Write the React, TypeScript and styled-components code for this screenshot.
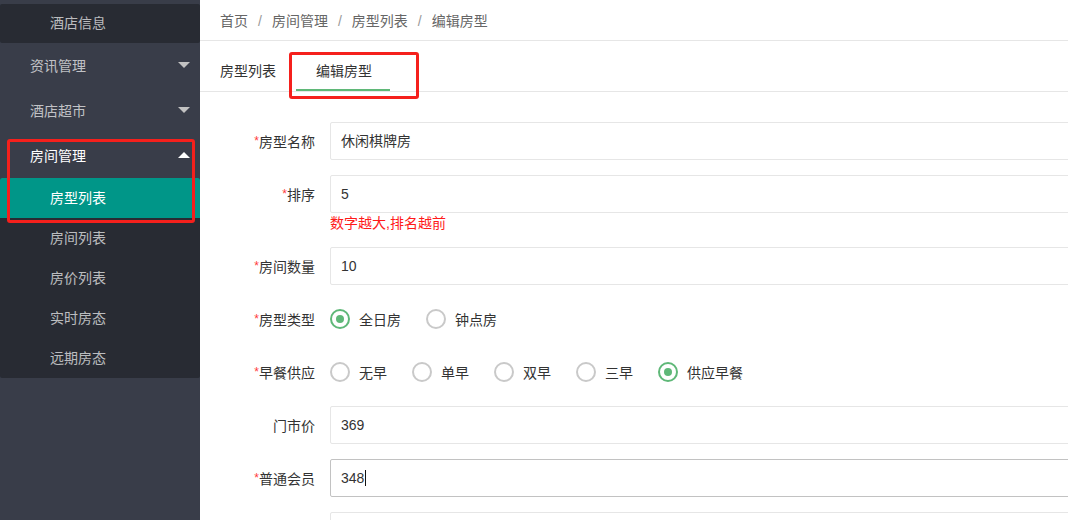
import { createGlobalStyle, styled } from "styled-components";

const GlobalStyle = createGlobalStyle`
  * {
    box-sizing: border-box;
  }
  body {
    margin: 0;
    width: 1068px;
    height: 520px;
    overflow: hidden;
    font-family: "Liberation Sans", "Noto Sans CJK SC", sans-serif;
    font-size: 14px;
    color: #333;
    background: #fff;
  }
`;

const menus = [
  { name: "资讯管理", open: false },
  { name: "酒店超市", open: false },
];

const roomMenu = ["房型列表", "房间列表", "房价列表", "实时房态", "远期房态"];

const crumbs = ["首页", "房间管理", "房型列表", "编辑房型"];

const roomTypes = [
  { name: "全日房", checked: true },
  { name: "钟点房", checked: false },
];

const breakfast = [
  { name: "无早", checked: false },
  { name: "单早", checked: false },
  { name: "双早", checked: false },
  { name: "三早", checked: false },
  { name: "供应早餐", checked: true },
];

const Radio = ({ name, checked }: { name: string; checked: boolean }) => (
  <RadioOption>
    <Circle checked={checked} />
    {name}
  </RadioOption>
);

export default function App() {
  return (
    <>
      <GlobalStyle />
      <Layout>
        <Sidebar>
          <SubMenu>
            <SubItem>酒店信息</SubItem>
          </SubMenu>
          {menus.map((m) => (
            <NavItem key={m.name}>
              {m.name}
              <Arrow up={m.open} />
            </NavItem>
          ))}
          <NavItem active>
            房间管理
            <Arrow up active />
          </NavItem>
          <SubMenu>
            {roomMenu.map((name, i) => (
              <SubItem key={name} active={i === 0}>
                {name}
              </SubItem>
            ))}
          </SubMenu>
          <MarkBox style={{ left: 7, top: 139, width: 188, height: 84 }} />
        </Sidebar>

        <Main>
          <Breadcrumb>
            {crumbs.map((c, i) => (
              <span key={c}>
                {i > 0 && <Sep>/</Sep>}
                {c}
              </span>
            ))}
          </Breadcrumb>

          <TabBar>
            <Tab>房型列表</Tab>
            <Tab active>编辑房型</Tab>
          </TabBar>

          <Form>
            <FormItem>
              <Label required>房型名称</Label>
              <Block>
                <InputBox>休闲棋牌房</InputBox>
              </Block>
            </FormItem>
            <FormItem>
              <Label required>排序</Label>
              <Block>
                <InputBox>5</InputBox>
                <Hint>数字越大,排名越前</Hint>
              </Block>
            </FormItem>
            <FormItem>
              <Label required>房间数量</Label>
              <Block>
                <InputBox>10</InputBox>
              </Block>
            </FormItem>
            <FormItem>
              <Label required>房型类型</Label>
              <RadioGroup>
                {roomTypes.map((r) => (
                  <Radio key={r.name} {...r} />
                ))}
              </RadioGroup>
            </FormItem>
            <FormItem>
              <Label required>早餐供应</Label>
              <RadioGroup>
                {breakfast.map((r) => (
                  <Radio key={r.name} {...r} />
                ))}
              </RadioGroup>
            </FormItem>
            <FormItem>
              <Label>门市价</Label>
              <Block>
                <InputBox>369</InputBox>
              </Block>
            </FormItem>
            <FormItem>
              <Label required>普通会员</Label>
              <Block>
                <InputBox focused>
                  348
                  <Caret />
                </InputBox>
              </Block>
            </FormItem>
            <FormItem>
              <Label />
              <Block>
                <InputBox />
              </Block>
            </FormItem>
          </Form>

          <MarkBox style={{ left: 89, top: 52, width: 130, height: 47 }} />
        </Main>
      </Layout>
    </>
  );
}

const Layout = styled.div`
  display: flex;
  width: 1068px;
  height: 520px;
`;

const Sidebar = styled.div`
  position: relative;
  width: 200px;
  flex-shrink: 0;
  height: 100%;
  background-color: #393d49;
  padding-top: 4px;
`;

const SubMenu = styled.div`
  background-color: #282b33;
  border-radius: 2px;
  overflow: hidden;
`;

const SubItem = styled.div<{ active?: boolean }>`
  height: 40px;
  line-height: 40px;
  padding-left: 50px;
  font-size: 14px;
  color: ${({ active }) => (active ? "#fff" : "rgba(255, 255, 255, 0.7)")};
  background-color: ${({ active }) => (active ? "#009688" : "transparent")};

  &:first-child:last-child {
    height: 39px;
    line-height: 39px;
  }
`;

const NavItem = styled.div<{ active?: boolean }>`
  height: 45px;
  display: flex;
  align-items: center;
  justify-content: space-between;
  padding: 0 10px 2px 30px;
  font-size: 14px;
  color: ${({ active }) => (active ? "#fff" : "rgba(255, 255, 255, 0.7)")};
`;

const Arrow = styled.span<{ up?: boolean; active?: boolean }>`
  width: 0;
  height: 0;
  border: 6px solid transparent;
  ${({ up, active }) =>
    up
      ? `border-bottom-color: ${active ? "#fff" : "#c2c2c2"}; border-top-width: 0;`
      : `border-top-color: ${active ? "#fff" : "#c2c2c2"}; border-bottom-width: 0;`}
`;

const MarkBox = styled.div`
  position: absolute;
  border: 3px solid #f5201c;
  border-radius: 3px;
  pointer-events: none;
`;

const Main = styled.div`
  position: relative;
  flex: 1;
  min-width: 0;
  overflow: hidden;
  background-color: #fff;
`;

const Breadcrumb = styled.div`
  height: 41px;
  display: flex;
  align-items: center;
  padding-left: 20px;
  border-bottom: 1px solid #e6e6e6;
  color: #666;
  font-size: 14px;
  white-space: nowrap;
`;

const Sep = styled.span`
  margin: 0 10px;
  color: #999;
`;

const TabBar = styled.div`
  display: flex;
  height: 41px;
  margin-top: 10px;
  border-bottom: 1px solid #e6e6e6;
`;

const Tab = styled.div<{ active?: boolean }>`
  position: relative;
  height: 40px;
  line-height: 40px;
  padding: 0 20px;
  color: #333;
  font-size: 14px;

  &::after {
    content: "";
    display: ${({ active }) => (active ? "block" : "none")};
    position: absolute;
    left: 0;
    right: 2px;
    bottom: 0;
    height: 2px;
    background-color: #5fb878;
  }
`;

const Form = styled.div`
  padding-top: 30px;
`;

const FormItem = styled.div`
  display: flex;
  align-items: flex-start;
  margin-bottom: 15px;
`;

const Label = styled.div<{ required?: boolean }>`
  width: 130px;
  flex-shrink: 0;
  padding-right: 15px;
  text-align: right;
  line-height: 38px;
  height: 38px;
  font-size: 14px;
  color: #333;

  &::before {
    content: ${({ required }) => (required ? '"*"' : '""')};
    color: #ff3b3b;
    font-size: 12px;
    vertical-align: 2px;
  }
`;

const Block = styled.div`
  width: 780px;
  flex-shrink: 0;
`;

const InputBox = styled.div<{ focused?: boolean }>`
  height: 38px;
  line-height: 36px;
  padding-left: 10px;
  border: 1px solid ${({ focused }) => (focused ? "#c2c2c2" : "#e6e6e6")};
  border-radius: 2px;
  background-color: #fff;
  color: #333;
  font-size: 14px;
`;

const Caret = styled.span`
  display: inline-block;
  width: 1px;
  height: 16px;
  margin-left: 1px;
  background-color: #111;
  vertical-align: middle;
  position: relative;
  top: -1px;
`;

const Hint = styled.div`
  margin-top: 1px;
  line-height: 18px;
  font-size: 14px;
  color: #ff1a1a;
`;

const RadioGroup = styled.div`
  display: flex;
  align-items: center;
  height: 38px;
`;

const RadioOption = styled.div`
  display: flex;
  align-items: center;
  margin-right: 25px;
  font-size: 14px;
  color: #333;
  white-space: nowrap;
`;

const Circle = styled.span<{ checked?: boolean }>`
  position: relative;
  width: 20px;
  height: 20px;
  margin-right: 9px;
  border-radius: 50%;
  border: 2px solid ${({ checked }) => (checked ? "#5fb878" : "#c9c9c9")};

  &::after {
    content: "";
    display: ${({ checked }) => (checked ? "block" : "none")};
    position: absolute;
    left: 4px;
    top: 4px;
    width: 8px;
    height: 8px;
    border-radius: 50%;
    background-color: #5fb878;
  }
`;
